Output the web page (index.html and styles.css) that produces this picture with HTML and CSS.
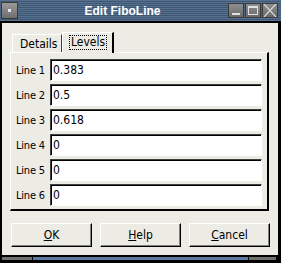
FILE: index.html
```html
<!DOCTYPE html>
<html lang="en">
  <head>
    <meta charset="UTF-8" />
    <title>Edit FiboLine</title>
    <link rel="stylesheet" href="styles.css">
  </head>
  <body>
    <div class="window">
      <div class="titlebar">
        <span class="menu-btn"><span class="dot"></span></span>
        <span class="title">Edit FiboLine</span>
        <span class="ctl ctl-min"><span class="bar"></span></span>
        <span class="ctl ctl-max"><span class="box"></span></span>
        <span class="ctl ctl-close">
          <svg width="14" height="13" viewBox="0 0 14 13">
            <path d="M1 0 L13 13 M13 0 L1 13" stroke="#d8d8d8" stroke-width="1.2" fill="none" />
          </svg>
        </span>
      </div>

      <div class="client">
        <div class="tabs">
          <div class="tab">Details</div>
          <div class="tab active"><span class="focus">Levels</span></div>
        </div>

        <div class="panel">
          <div class="row"><label>Line 1</label><input type="text" value="0.383"></div>
          <div class="row"><label>Line 2</label><input type="text" value="0.5"></div>
          <div class="row"><label>Line 3</label><input type="text" value="0.618"></div>
          <div class="row"><label>Line 4</label><input type="text" value="0"></div>
          <div class="row"><label>Line 5</label><input type="text" value="0"></div>
          <div class="row"><label>Line 6</label><input type="text" value="0"></div>
        </div>

        <div class="buttons">
          <button><u>O</u>K</button>
          <button><u>H</u>elp</button>
          <button><u>C</u>ancel</button>
        </div>
      </div>

      <div class="frame-bottom">
        <span class="grip"></span>
        <span class="edge"></span>
        <span class="grip"></span>
      </div>
    </div>
  </body>
</html>
```

FILE: styles.css
```css
body {
  margin: 0;
  background: #000;
}

.window {
  width: 281px;
  height: 263px;
  background: #000;
  display: flex;
  flex-direction: column;
  font-family: "Liberation Sans Narrow", "DejaVu Sans Condensed", sans-serif;
  font-size: 12px;
  color: #000;
}

/* title bar */
.titlebar {
  height: 21px;
  display: flex;
  align-items: center;
  background: repeating-linear-gradient(#56708f 0 1px, #3f5773 1px 2px);
}

.menu-btn {
  width: 15px;
  height: 15px;
  margin-left: 1px;
  border: 1px solid #3a3a3a;
  background: linear-gradient(#9a9a9a, #6e6e6e);
  display: flex;
  align-items: center;
  justify-content: center;
}

.menu-btn .dot {
  width: 3px;
  height: 3px;
  background: #e6e6e6;
}

.title {
  flex: 1;
  text-align: center;
  color: #fff;
  font-family: "Liberation Sans", Arial, sans-serif;
  font-weight: bold;
  font-size: 12px;
}

.ctl {
  width: 14px;
  height: 13px;
  margin-left: 1px;
  border: 1px solid #3a3a3a;
  background: linear-gradient(#8e8e8e, #6a6a6a);
  position: relative;
}

.ctl-close {
  margin-right: 3px;
}

.ctl-min .bar {
  position: absolute;
  left: 3px;
  right: 3px;
  bottom: 2px;
  height: 2px;
  background: #e0e0e0;
}

.ctl-max .box {
  position: absolute;
  left: 2px;
  top: 2px;
  right: 2px;
  bottom: 2px;
  border: 1px solid #e0e0e0;
  border-top-width: 2px;
}

.ctl-close svg {
  display: block;
}

/* dialog body */
.client {
  margin: 2px 3px 0 2px;
  height: 232px;
  background: #ecebe4;
  padding: 9px 0 0 8px;
  box-sizing: border-box;
}

.tabs {
  display: flex;
  align-items: flex-end;
  height: 20px;
  margin-left: 2px;
}

.tab {
  height: 18px;
  width: 50px;
  box-sizing: border-box;
  border-top: 1px solid #fff;
  border-left: 1px solid #fff;
  border-right: 1px solid #404040;
  padding: 2px 0 0 7px;
}

.tab.active {
  position: relative;
  height: 21px;
  width: 52px;
  margin-bottom: -1px;
  border-right: 2px solid #000;
  background: #ecebe4;
  padding: 2px 0 0 6px;
  z-index: 1;
}

.focus {
  display: inline-block;
  border: 1px dotted #000;
  padding: 0 1px;
  line-height: 13px;
}

.panel {
  width: 259px;
  height: 159px;
  box-sizing: border-box;
  border-top: 1px solid #fff;
  border-left: 1px solid #fff;
  border-right: 2px solid #000;
  border-bottom: 2px solid #000;
  padding: 6px 0 0 5px;
  display: flex;
  flex-direction: column;
  gap: 3px;
}

.row {
  display: flex;
  align-items: center;
  height: 22px;
}

.row label {
  width: 34px;
  font-size: 11px;
  letter-spacing: -0.2px;
}

.row input {
  width: 212px;
  height: 22px;
  box-sizing: border-box;
  margin: 0;
  padding: 0 0 0 2px;
  font: inherit;
  background: #fff;
  border: 1px solid;
  border-color: #404040 #fff #fff #404040;
  box-shadow: inset 1px 1px 0 #000;
  outline: none;
}

.buttons {
  display: flex;
  gap: 8px;
  margin: 12px 0 0 1px;
}

.buttons button {
  width: 81px;
  height: 24px;
  margin: 0;
  padding: 0;
  font: inherit;
  color: #000;
  background: #ecebe4;
  border: 1px solid;
  border-color: #fff #000 #000 #fff;
  box-shadow: inset -1px -1px 0 #808080;
}

.buttons u {
  text-decoration-thickness: 1px;
}

/* bottom frame */
.frame-bottom {
  display: flex;
  height: 3px;
  margin: 2px 5px 0 2px;
}

.frame-bottom .grip {
  width: 30px;
  background: #707070;
}

.frame-bottom .grip:last-child {
  width: 27px;
}

.frame-bottom .edge {
  flex: 1;
  margin: 0 1px;
  background: #5b7ba0;
}
```
